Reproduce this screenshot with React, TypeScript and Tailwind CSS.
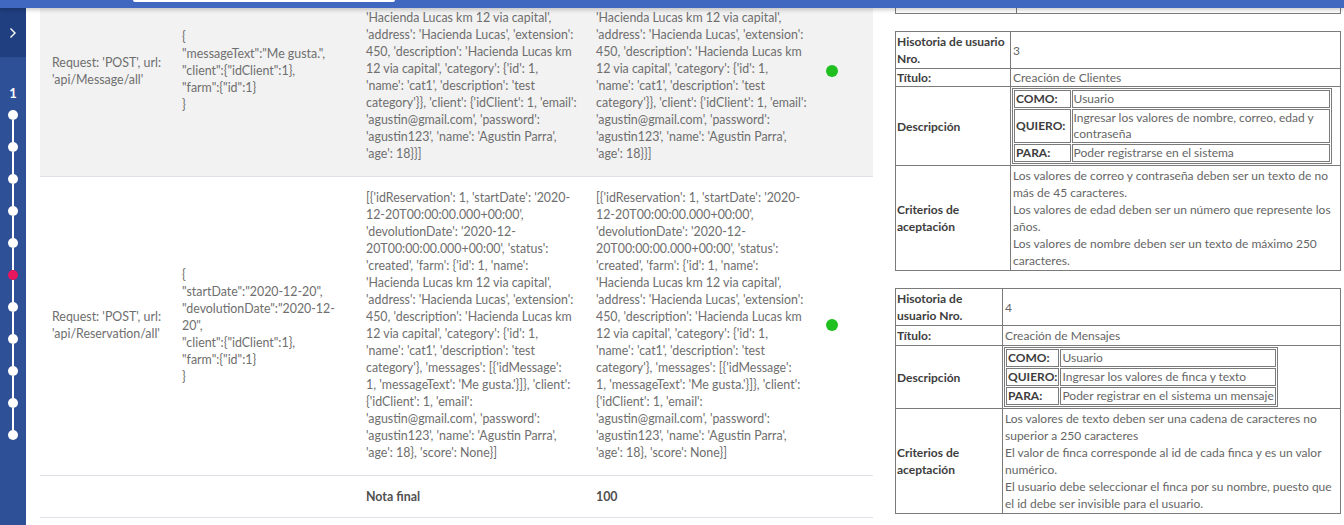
import React from "react";

const FONT = "[font-family:Lato,'Noto_Sans',sans-serif]";

const row1Lines = [
  "[{'idMessage': 1, 'messageText': 'Me",
  "gusta.', 'farm': {'id': 1, 'name':",
  "'Hacienda Lucas km 12 via capital',",
  "'address': 'Hacienda Lucas', 'extension':",
  "450, 'description': 'Hacienda Lucas km",
  "12 via capital', 'category': {'id': 1,",
  "'name': 'cat1', 'description': 'test",
  "category'}}, 'client': {'idClient': 1, 'email':",
  "'agustin@gmail.com', 'password':",
  "'agustin123', 'name': 'Agustin Parra',",
  "'age': 18}}]",
];

const row2Lines = [
  "[{'idReservation': 1, 'startDate': '2020-",
  "12-20T00:00:00.000+00:00',",
  "'devolutionDate': '2020-12-",
  "20T00:00:00.000+00:00', 'status':",
  "'created', 'farm': {'id': 1, 'name':",
  "'Hacienda Lucas km 12 via capital',",
  "'address': 'Hacienda Lucas', 'extension':",
  "450, 'description': 'Hacienda Lucas km",
  "12 via capital', 'category': {'id': 1,",
  "'name': 'cat1', 'description': 'test",
  "category'}, 'messages': [{'idMessage':",
  "1, 'messageText': 'Me gusta.'}]}, 'client':",
  "{'idClient': 1, 'email':",
  "'agustin@gmail.com', 'password':",
  "'agustin123', 'name': 'Agustin Parra',",
  "'age': 18}, 'score': None}]",
];

function Lines({ lines, hidden = 0 }: { lines: string[]; hidden?: number }) {
  return (
    <div>
      {lines.map((l, i) => (
        <div key={i} className={`whitespace-nowrap ${i < hidden ? "invisible" : ""}`}>
          {l}
        </div>
      ))}
    </div>
  );
}

function Dot() {
  return <div className="w-[12px] h-[12px] rounded-full bg-[#1fc01f]" />;
}

function MainTable() {
  const td = "px-[12px] py-[12px] align-middle border-t border-[#dee2e6]";
  const td1 = "px-[12px] pt-[10px] pb-[14px] align-middle border-t border-[#dee2e6]";
  const td2 = "px-[12px] pt-[12px] pb-[14px] align-middle border-t border-[#dee2e6]";
  return (
    <table className="table-fixed w-[833px] border-collapse text-[12.4px] leading-[17px] text-[#6e6e6e]">
      <colgroup>
        <col className="w-[130px]" />
        <col className="w-[184px]" />
        <col className="w-[230px]" />
        <col className="w-[230px]" />
        <col className="w-[59px]" />
      </colgroup>
      <tbody>
        <tr className="bg-[#f2f2f2]">
          <td className={td}>
            <Lines lines={["Request: 'POST', url:", "'api/Message/all'"]} />
          </td>
          <td className={td}>
            <Lines
              lines={[
                "{",
                '"messageText":"Me gusta.",',
                '"client":{"idClient":1},',
                '"farm":{"id":1}',
                "}",
              ]}
            />
          </td>
          <td className={td1}>
            <Lines lines={row1Lines} hidden={2} />
          </td>
          <td className={td1}>
            <Lines lines={row1Lines} hidden={2} />
          </td>
          <td className={td}>
            <Dot />
          </td>
        </tr>
        <tr>
          <td className={td2}>
            <Lines lines={["Request: 'POST', url:", "'api/Reservation/all'"]} />
          </td>
          <td className={td2}>
            <Lines
              lines={[
                "{",
                '"startDate":"2020-12-20",',
                '"devolutionDate":"2020-12-',
                '20",',
                '"client":{"idClient":1},',
                '"farm":{"id":1}',
                "}",
              ]}
            />
          </td>
          <td className={td2}>
            <Lines lines={row2Lines} />
          </td>
          <td className={td2}>
            <Lines lines={row2Lines} />
          </td>
          <td className={td2}>
            <Dot />
          </td>
        </tr>
        <tr>
          <td className={`${td} border-b`} />
          <td className={`${td} border-b`} />
          <td className={`${td} border-b font-bold text-[#505050]`}>Nota final</td>
          <td className={`${td} border-b font-bold text-[#505050]`}>100</td>
          <td className={`${td} border-b`} />
        </tr>
      </tbody>
    </table>
  );
}

const B = "border border-[#7b7b7b]";

function Nested({
  rows,
  className,
}: {
  rows: { k: string; v: string[] }[];
  className?: string;
}) {
  return (
    <table className={`border-separate border-spacing-[1px] ${B} ${className ?? ""}`}>
      <tbody>
        {rows.map((r) => (
          <tr key={r.k}>
            <td className={`${B} px-[1px] leading-[16px] font-bold text-[#3d3d3d] align-middle whitespace-nowrap`}>
              {r.k}
            </td>
            <td className={`${B} px-[1px] leading-[16px] align-middle`}>
              {r.v.map((x, i) => (
                <div key={i} className="whitespace-nowrap">
                  {x}
                </div>
              ))}
            </td>
          </tr>
        ))}
      </tbody>
    </table>
  );
}

function Story({
  labelW,
  nro,
  nroLabel,
  titulo,
  tituloPy,
  nested,
  nestedClass,
  criterios,
}: {
  labelW: string;
  nro: string;
  nroLabel: string[];
  titulo: string;
  tituloPy: string;
  nested: { k: string; v: string[] }[];
  nestedClass?: string;
  criterios: string[];
}) {
  const lab = `${B} px-[1px] font-bold text-[#3d3d3d] align-middle`;
  const val = `${B} px-[2px] align-middle`;
  return (
    <table className="w-full border-collapse text-[12px] leading-[17px] text-[#666]">
      <colgroup>
        <col className={labelW} />
        <col />
      </colgroup>
      <tbody>
        <tr>
          <td className={`${lab} py-[1px]`}>
            {nroLabel.map((l, i) => (
              <div key={i} className="whitespace-nowrap">
                {l}
              </div>
            ))}
          </td>
          <td className={`${val} py-[1px]`}>{nro}</td>
        </tr>
        <tr>
          <td className={`${lab} ${tituloPy}`}>Título:</td>
          <td className={`${val} ${tituloPy}`}>{titulo}</td>
        </tr>
        <tr>
          <td className={`${lab} py-[1px]`}>Descripción</td>
          <td className={`${B} px-[1px] py-[1px] align-middle`}>
            <Nested rows={nested} className={nestedClass} />
          </td>
        </tr>
        <tr>
          <td className={`${lab} py-[1px]`}>
            <div>Criterios de</div>
            <div>aceptación</div>
          </td>
          <td className={`${val} py-[1px]`}>
            {criterios.map((l, i) => (
              <div key={i} className="whitespace-nowrap">
                {l}
              </div>
            ))}
          </td>
        </tr>
      </tbody>
    </table>
  );
}

function Sidebar() {
  const dots = Array.from({ length: 11 });
  return (
    <div className="w-[26px] shrink-0 bg-[#2e5096] flex flex-col items-center pt-[8px]">
      <div className="w-full h-[49px] bg-[#203f80] flex items-center justify-center">
        <svg width="8" height="12" viewBox="0 0 8 12" fill="none">
          <path d="M1.5 1.5 L6 6 L1.5 10.5" stroke="white" strokeWidth="1.4" />
        </svg>
      </div>
      <div className="mt-[28px] text-[13px] leading-[16px] font-bold text-white">1</div>
      <div className="mt-[9px] flex flex-col items-center">
        {dots.map((_, i) => (
          <React.Fragment key={i}>
            {i > 0 && <div className="w-[2px] h-[22px] bg-white" />}
            <div
              className={`w-[10px] h-[10px] rounded-full ${i === 5 ? "bg-[#e8175d]" : "bg-white"}`}
            />
          </React.Fragment>
        ))}
      </div>
    </div>
  );
}

export default function App() {
  return (
    <div className={`relative w-[1344px] h-[525px] overflow-hidden bg-white flex ${FONT}`}>
      <Sidebar />
      <div className="flex-1 flex">
        <div className="w-[854px] pl-[14px] -mt-[36px]">
          <MainTable />
        </div>
        <div className="flex-1 pl-[15px] pr-[3px]">
          <div className={`-mt-[17px] h-[31px] ${B} flex`}>
            <div className="w-[121px] border-r border-[#7b7b7b]" />
          </div>
          <div className="mt-[17px]">
            <Story
              labelW="w-[115px]"
              nroLabel={["Hisotoria de usuario", "Nro."]}
              nro="3"
              titulo="Creación de Clientes"
              tituloPy="py-0"
              nestedClass="w-[320px]"
              nested={[
                { k: "COMO:", v: ["Usuario"] },
                {
                  k: "QUIERO:",
                  v: ["Ingresar los valores de nombre, correo, edad y", "contraseña"],
                },
                { k: "PARA:", v: ["Poder registrarse en el sistema"] },
              ]}
              criterios={[
                "Los valores de correo y contraseña deben ser un texto de no",
                "más de 45 caracteres.",
                "Los valores de edad deben ser un número que represente los",
                "años.",
                "Los valores de nombre deben ser un texto de máximo 250",
                "caracteres.",
              ]}
            />
          </div>
          <div className="mt-[17px]">
            <Story
              labelW="w-[107px]"
              nroLabel={["Hisotoria de", "usuario Nro."]}
              nro="4"
              titulo="Creación de Mensajes"
              tituloPy="py-[1px]"
              nested={[
                { k: "COMO:", v: ["Usuario"] },
                { k: "QUIERO:", v: ["Ingresar los valores de finca y texto"] },
                { k: "PARA:", v: ["Poder registrar en el sistema un mensaje"] },
              ]}
              criterios={[
                "Los valores de texto deben ser una cadena de caracteres no",
                "superior a 250 caracteres",
                "El valor de finca corresponde al id de cada finca y es un valor",
                "numérico.",
                "El usuario debe seleccionar el finca por su nombre, puesto que",
                "el id debe ser invisible para el usuario.",
              ]}
            />
          </div>
        </div>
      </div>
      <div className="absolute top-0 left-0 right-0 h-[8px] bg-[#4168c0] shadow-[0_2px_4px_rgba(0,0,0,0.2)]">
        <div className="absolute left-[133px] top-0 w-[262px] h-[2px] bg-white rounded-b-[2px]" />
      </div>
    </div>
  );
}
